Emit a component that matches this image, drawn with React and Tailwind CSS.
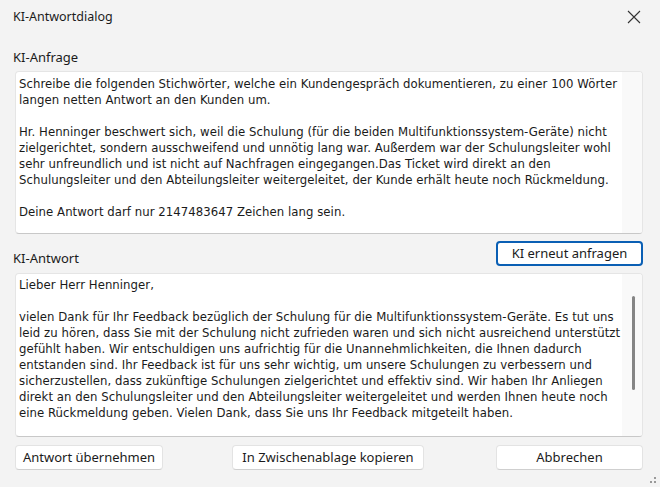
import React from "react";

const body = { fontFamily: '"DejaVu Sans Condensed", "DejaVu Sans", sans-serif' };
const ui = { fontFamily: '"Noto Sans", "Open Sans", sans-serif' };

const req = [
  "Schreibe die folgenden Stichwörter, welche ein Kundengespräch dokumentieren, zu einer 100 Wörter",
  "langen netten Antwort an den Kunden um.",
  "",
  "Hr. Henninger beschwert sich, weil die Schulung (für die beiden Multifunktionssystem-Geräte) nicht",
  "zielgerichtet, sondern ausschweifend und unnötig lang war. Außerdem war der Schulungsleiter wohl",
  "sehr unfreundlich und ist nicht auf Nachfragen eingegangen.Das Ticket wird direkt an den",
  "Schulungsleiter und den Abteilungsleiter weitergeleitet, der Kunde erhält heute noch Rückmeldung.",
  "",
  "Deine Antwort darf nur 2147483647 Zeichen lang sein.",
];

const ans = [
  "Lieber Herr Henninger,",
  "",
  "vielen Dank für Ihr Feedback bezüglich der Schulung für die Multifunktionssystem-Geräte. Es tut uns",
  "leid zu hören, dass Sie mit der Schulung nicht zufrieden waren und sich nicht ausreichend unterstützt",
  "gefühlt haben. Wir entschuldigen uns aufrichtig für die Unannehmlichkeiten, die Ihnen dadurch",
  "entstanden sind. Ihr Feedback ist für uns sehr wichtig, um unsere Schulungen zu verbessern und",
  "sicherzustellen, dass zukünftige Schulungen zielgerichtet und effektiv sind. Wir haben Ihr Anliegen",
  "direkt an den Schulungsleiter und den Abteilungsleiter weitergeleitet und werden Ihnen heute noch",
  "eine Rückmeldung geben. Vielen Dank, dass Sie uns Ihr Feedback mitgeteilt haben.",
];

function Lines({ lines }) {
  return (
    <div className="text-[13px] leading-[16px] tracking-[0.05px] text-[#1a1a1a] whitespace-nowrap" style={body}>
      {lines.map((l, i) => (
        <div key={i} className="h-[16px]">{l || "\u00a0"}</div>
      ))}
    </div>
  );
}

function Btn({ children, w, primary }) {
  return (
    <button
      className={
        "h-[25px] rounded-[4px] bg-white text-[13px] text-[#1b1b1b] flex items-center justify-center " +
        (primary
          ? "border-2 border-[#0a5fb4]"
          : "border border-[#e3e3e3] border-b-[#cfcfcf]")
      }
      style={{ ...ui, width: w }}
    >
      {children}
    </button>
  );
}

export default function App() {
  return (
    <div className="w-[660px] h-[487px] bg-[#f3f3f3] overflow-hidden relative flex flex-col" style={ui}>
      <div className="h-[34px] flex items-center justify-between pl-[13px] pr-[19px] shrink-0">
        <span className="text-[12.5px] text-[#1b1b1b]">KI-Antwortdialog</span>
        <svg width="14" height="14" viewBox="0 0 14 14">
          <path d="M1 1 L13 13 M13 1 L1 13" stroke="#333" strokeWidth="1.1" fill="none" />
        </svg>
      </div>
      <div className="mt-[15px] pl-[13px] h-[16px] leading-[16px] text-[13px] text-[#1b1b1b]">KI-Anfrage</div>
      <div className="mt-[6px] ml-[15px] w-[628px] h-[163px] rounded-[4px] border border-[#e5e5e5] border-b-[#c8c8c8] bg-white flex overflow-hidden">
        <div className="flex-1 pl-[3px] pt-[4px]">
          <Lines lines={req} />
        </div>
        <div className="w-[20px] bg-[#f9f9f9]" />
      </div>
      <div className="mt-[7px] h-[25px] flex items-end justify-between pl-[13px] pr-[17px]">
        <span className="text-[13px] leading-[16px] text-[#1b1b1b]">KI-Antwort</span>
        <Btn w={147} primary>KI erneut anfragen</Btn>
      </div>
      <div className="mt-[7px] ml-[15px] w-[628px] h-[164px] rounded-[4px] border border-[#e5e5e5] border-b-[#c8c8c8] bg-white flex overflow-hidden">
        <div className="flex-1 pl-[3px] pt-[3px]">
          <Lines lines={ans} />
        </div>
        <div className="w-[20px] bg-[#f9f9f9] pt-[22px] flex justify-center">
          <div className="w-[3px] h-[94px] rounded-full bg-[#858585] ml-[2px]" />
        </div>
      </div>
      <div className="mt-[8px] flex pl-[15px] gap-[69px]">
        <Btn w={148}>Antwort übernehmen</Btn>
        <Btn w={192}>In Zwischenablage kopieren</Btn>
        <div className="ml-[3px]">
          <Btn w={147}>Abbrechen</Btn>
        </div>
      </div>
      <svg className="absolute right-[3px] bottom-[3px]" width="8" height="8" viewBox="0 0 8 8">
        <rect x="5" y="1" width="2" height="2" fill="#999" />
        <rect x="1" y="5" width="2" height="2" fill="#999" />
        <rect x="5" y="5" width="2" height="2" fill="#999" />
      </svg>
    </div>
  );
}
